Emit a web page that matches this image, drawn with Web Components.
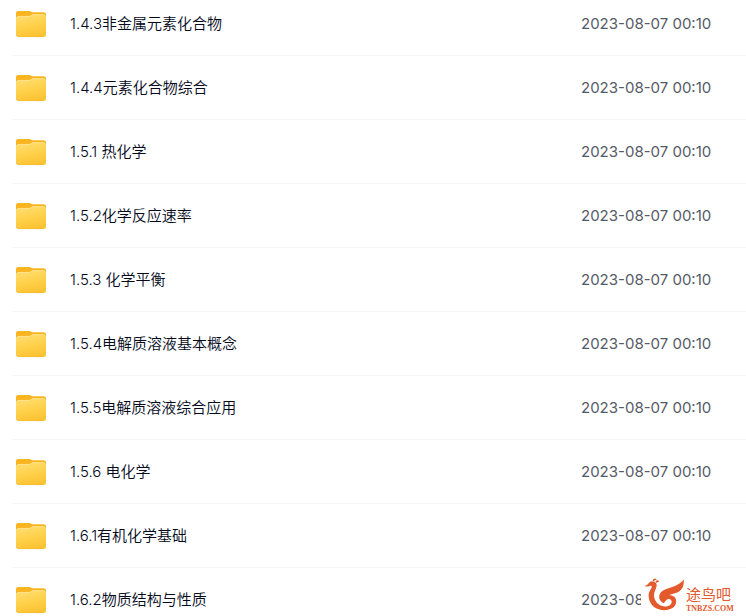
<!DOCTYPE html>
<html lang="zh-CN">
<head>
<meta charset="utf-8">
<meta name="viewport" content="width=device-width, initial-scale=1">
<title>文件列表</title>
<style>
  html {
    scrollbar-width: none;
  }

  body {
    margin: 0;
    background: #fff;
    color: #03081a;
    font: 15px/24px Inter, "Noto Sans CJK SC", sans-serif;
  }
</style>
</head>
<body>
<file-list>
  <file-row date="2023-08-07 00:10">1.4.3非金属元素化合物</file-row>
  <file-row date="2023-08-07 00:10">1.4.4元素化合物综合</file-row>
  <file-row date="2023-08-07 00:10">1.5.1 热化学</file-row>
  <file-row date="2023-08-07 00:10">1.5.2化学反应速率</file-row>
  <file-row date="2023-08-07 00:10">1.5.3 化学平衡</file-row>
  <file-row date="2023-08-07 00:10">1.5.4电解质溶液基本概念</file-row>
  <file-row date="2023-08-07 00:10">1.5.5电解质溶液综合应用</file-row>
  <file-row date="2023-08-07 00:10">1.5.6 电化学</file-row>
  <file-row date="2023-08-07 00:10">1.6.1有机化学基础</file-row>
  <file-row date="2023-08-07 00:10">1.6.2物质结构与性质</file-row>
</file-list>
<site-mark></site-mark>

<script>
class FolderIcon extends HTMLElement {
  connectedCallback() {
    const shadow = this.attachShadow({ mode: "open" })

    shadow.innerHTML = `
      <style>
        :host {
          display: block;
          width: 32px;
          height: 28px;
        }

        svg {
          display: block;
        }
      </style>

      <svg width="32" height="28" viewBox="0 0 32 28" aria-hidden="true">
        <defs>
          <linearGradient id="front" x1="0" y1="0" x2="0.3" y2="1">
            <stop offset="0" stop-color="#ffdf77" />
            <stop offset="0.5" stop-color="#ffd350" />
            <stop offset="1" stop-color="#fdc536" />
          </linearGradient>
        </defs>
        <path fill="#f8b51f" d="M1 3.2Q1 1 3.2 1H14.2Q15.4 1 16.2 1.7L17 2.3H28.6Q31 2.3 31 4.8V16H1Z" />
        <path fill="url(#front)" d="M1 9Q1 6 4 6H13.6Q14.8 6 15.6 5.4L16.4 4.8Q17.2 4.3 18.4 4.3H27.6Q31 4.3 31 7.8V24Q31 27 28 27H4Q1 27 1 24Z" />
        <path fill="none" stroke="#ffe8a0" stroke-width="0.7" d="M2 7.4Q2.5 6.4 4 6.4H13.8Q15 6.4 15.9 5.8Q17 4.7 18.4 4.7H27.4Q29.4 4.7 30.2 6.2" />
        <path fill="none" stroke="#f6b72a" stroke-width="0.7" d="M1.5 24.5Q2 26.6 4.2 26.6H27.8Q30 26.6 30.5 24.5" />
      </svg>
    `
  }
}

class FileRow extends HTMLElement {
  connectedCallback() {
    const shadow = this.attachShadow({ mode: "open" })
    this.setAttribute("role", "listitem")

    shadow.innerHTML = `
      <style>
        :host {
          display: grid;
          grid-template-columns: 32px minmax(0, 1fr) 165px;
          align-items: center;
          box-sizing: border-box;
          height: 64px;
          padding-left: 3px;
          border-bottom: 1px solid #f4f5f6;
        }

        a {
          justify-self: start;
          margin-left: 23px;
          color: inherit;
          font-weight: 350;
          text-decoration: none;
          white-space: nowrap;
        }

        a:hover {
          color: #06a7ff;
        }

        time {
          color: #555b66;
          white-space: nowrap;
        }
      </style>

      <folder-icon></folder-icon>
      <a href="#"><slot></slot></a>
      <time>${this.getAttribute("date")}</time>
    `
  }
}

class FileList extends HTMLElement {
  connectedCallback() {
    const shadow = this.attachShadow({ mode: "open" })
    this.setAttribute("role", "list")

    shadow.innerHTML = `
      <style>
        /* the first row starts just above the top edge */
        :host {
          display: block;
          margin: -8px 0 0 12px;
        }
      </style>

      <slot></slot>
    `
  }
}

class SiteMark extends HTMLElement {
  connectedCallback() {
    const shadow = this.attachShadow({ mode: "open" })

    shadow.innerHTML = `
      <style>
        /* floats over the corner of the list */
        :host {
          position: fixed;
          right: 0;
          bottom: 0;
          display: flex;
          gap: 2px;
          box-sizing: border-box;
          width: 105px;
          height: 42px;
          padding: 4px 0 0 3px;
          background: #fff;
          color: #e35a2c;
        }

        svg {
          flex: none;
        }

        div {
          padding-top: 8px;
          white-space: nowrap;
        }

        strong,
        small {
          display: block;
        }

        strong {
          font: 400 15px/16px "Noto Sans CJK SC", sans-serif;
        }

        small {
          padding-top: 3px;
          font: 700 8px/8px "Liberation Serif", serif;
        }
      </style>

      <svg width="40" height="34" viewBox="0 0 40 34" aria-hidden="true">
        <path fill="currentColor" d="M0.5 8Q3 7.4 4.4 5.4Q6.4 2.8 9.4 3.4Q13.2 4.2 12.6 8C12.2 11 10 13.4 10 17C10 21.4 12.4 25.4 16.6 27.4C21 29.4 26.6 28.6 27.6 24.8C28.2 22.2 26.4 20.6 24.2 21C22.4 21.4 21.6 23.2 19.6 25.2C16.2 23.4 14.6 20.6 15.4 17.2C17.6 8.6 33 11 39.6 1.4C40.4 6.4 38.8 10.8 35.4 13.2C32 15.6 28 15.4 24.6 17.4C28.8 16.8 32.4 19.4 32.2 23.6C32 29.4 26.4 32.4 19.6 32.2C10.4 32 4.6 25.4 4.6 17.6C4.6 13.2 7.4 11 7.8 9C8 7.8 6.8 7.6 5.2 8.2Q2.8 9 0.5 8Z" />
        <path fill="currentColor" d="M8.6 2.8Q8.8 0.6 11.4 0.6Q12.6 0.8 12.4 1.8Q10.8 1.6 10.2 3.2ZM11.6 3.8Q12.4 1.8 14.6 2.6Q15.2 3.4 14.6 4Q13.4 3.6 12.8 5Z" />
      </svg>
      <div>
        <strong>途鸟吧</strong>
        <small>TNBZS.COM</small>
      </div>
    `
  }
}

customElements.define("folder-icon", FolderIcon)
customElements.define("file-row", FileRow)
customElements.define("file-list", FileList)
customElements.define("site-mark", SiteMark)
</script>
</body>
</html>
